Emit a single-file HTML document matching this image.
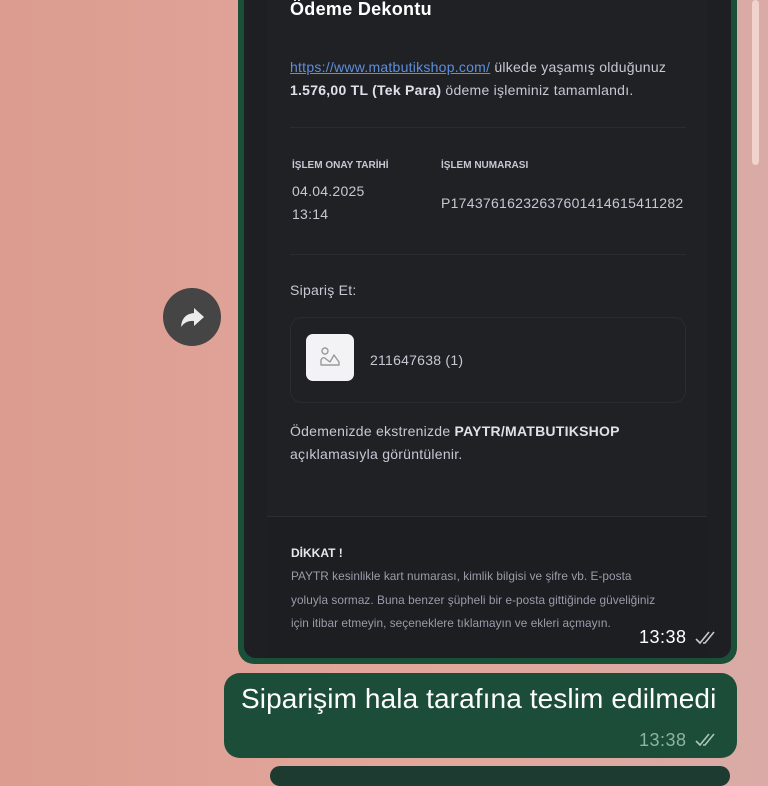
<!DOCTYPE html>
<html><head><meta charset="utf-8"><style>
*{margin:0;padding:0;box-sizing:border-box}
body{width:768px;height:768px;overflow:hidden;position:relative;background:linear-gradient(90deg,#dc9c90 0%,#e3a89c 60%,#d9aaa6 100%);font-family:"Liberation Sans",sans-serif}
.abs{position:absolute}
.outer{left:238px;top:-20px;width:499px;height:684px;background:#1a4f38;border-radius:16px}
.inner{left:244px;top:-20px;width:487px;height:678px;background:#1e1f23;border-radius:12px;overflow:hidden}
.card{left:267px;top:0;width:440px;height:658px;background:#202125}
.foot{left:267px;top:516px;width:440px;height:142px;background:#1d1e21;border-top:1px solid #2c2d31}
.t{color:#c6c8d4;font-size:14px;line-height:23px;letter-spacing:.25px;white-space:nowrap}
.b{color:#dfe1ea;font-weight:bold}
.hr{height:1px;background:#2a2b30}
</style></head><body>
<div class="abs" style="left:752px;top:0;width:7px;height:165px;background:#efd3cc;border-radius:4px"></div>
<div class="abs outer"></div>
<div class="abs inner"></div>
<div class="abs card"></div>
<div class="abs" style="left:290px;top:-1px;color:#fff;font-size:18px;font-weight:bold;letter-spacing:.3px">Ödeme Dekontu</div>
<div class="abs t" style="left:290px;top:56px"><span style="color:#5e8fd8;text-decoration:underline">https://www.matbutikshop.com/</span> ülkede yaşamış olduğunuz<br><span class="b">1.576,00 TL (Tek Para)</span> ödeme işleminiz tamamlandı.</div>
<div class="abs hr" style="left:290px;top:127px;width:396px"></div>
<div class="abs" style="left:292px;top:160px;color:#c6c8d4;font-size:10px;font-weight:bold">İŞLEM ONAY TARİHİ</div>
<div class="abs" style="left:441px;top:160px;color:#c6c8d4;font-size:10px;font-weight:bold">İŞLEM NUMARASI</div>
<div class="abs t" style="left:292px;top:180px">04.04.2025<br>13:14</div>
<div class="abs t" style="left:441px;top:192px;letter-spacing:.28px">P17437616232637601414615411282</div>
<div class="abs hr" style="left:290px;top:254px;width:396px"></div>
<div class="abs t" style="left:290px;top:279px">Sipariş Et:</div>
<div class="abs" style="left:290px;top:317px;width:396px;height:86px;border:1px solid #2b2c31;border-radius:12px"></div>
<div class="abs" style="left:306px;top:334px;width:48px;height:47px;background:#f3f3f6;border-radius:7px">
<svg width="48" height="47" viewBox="0 0 48 47"><circle cx="19" cy="17" r="3" fill="none" stroke="#999" stroke-width="1.4"/><path d="M15 31 L15 26 Q17 22 20 25 L24 28 L28 21 L33 28 L33 31 Z" fill="none" stroke="#999" stroke-width="1.4" stroke-linejoin="round"/></svg></div>
<div class="abs t" style="left:370px;top:349px">211647638 (1)</div>
<div class="abs t" style="left:290px;top:420px">Ödemenizde ekstrenizde <span class="b">PAYTR/MATBUTIKSHOP</span><br>açıklamasıyla görüntülenir.</div>
<div class="abs foot"></div>
<div class="abs" style="left:291px;top:546px;color:#e6e7ee;font-size:12px;font-weight:bold">DİKKAT !</div>
<div class="abs" style="left:291px;top:565px;color:#9a9cab;font-size:11.8px;line-height:23.5px;letter-spacing:.05px;white-space:nowrap">PAYTR kesinlikle kart numarası, kimlik bilgisi ve şifre vb. E-posta<br>yoluyla sormaz. Buna benzer şüpheli bir e-posta gittiğinde güveliğiniz<br>için itibar etmeyin, seçeneklere tıklamayın ve ekleri açmayın.</div>
<div class="abs" style="left:639px;top:627px;color:#fff;font-size:18px;letter-spacing:.5px">13:38</div>
<svg class="abs" style="left:694px;top:629px" width="26" height="18" viewBox="0 0 26 18"><path d="M2 10 L6 14 L15 3 M9 14 L11 14 L20 3" fill="none" stroke="#c8c8c8" stroke-width="1.6"/></svg>
<div class="abs" style="left:163px;top:288px;width:58px;height:58px;border-radius:50%;background:#454545"></div>
<svg class="abs" style="left:176px;top:302px" width="32" height="30" viewBox="0 0 32 30"><path d="M18 6 L28 15 L18 24 L18 19 Q10 18 5 25 Q6 12 18 11 Z" fill="#ececec"/></svg>
<div class="abs" style="left:224px;top:673px;width:513px;height:85px;background:#1b4d38;border-radius:16px"></div>
<div class="abs" style="left:241px;top:683px;color:#fff;font-size:28px;letter-spacing:.1px;white-space:nowrap">Siparişim hala tarafına teslim edilmedi</div>
<div class="abs" style="left:639px;top:730px;color:#8fb3a2;font-size:18px;letter-spacing:.5px">13:38</div>
<svg class="abs" style="left:694px;top:731px" width="26" height="18" viewBox="0 0 26 18"><path d="M2 10 L6 14 L15 3 M9 14 L11 14 L20 3" fill="none" stroke="#a9c7b8" stroke-width="1.6"/></svg>
<div class="abs" style="left:270px;top:766px;width:460px;height:20px;background:#1d3b30;border-radius:14px"></div>
</body></html>
